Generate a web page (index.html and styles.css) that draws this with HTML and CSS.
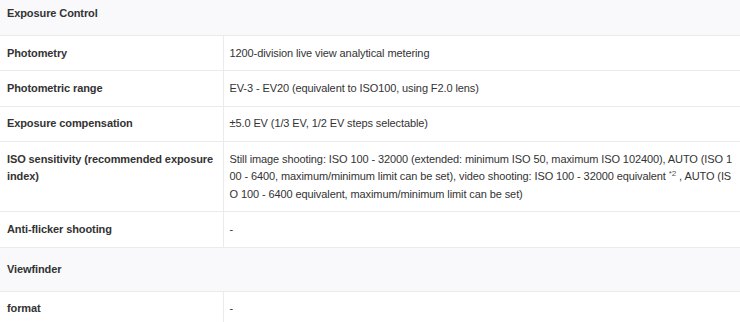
FILE: index.html
```html
<!DOCTYPE html>
<html>
<head>
<meta charset="utf-8">
<link rel="stylesheet" href="styles.css">
</head>
<body>
<table class="spec">
  <colgroup>
    <col class="col-label">
    <col class="col-value">
  </colgroup>
  <tbody>
    <tr class="section"><th colspan="2">Exposure Control</th></tr>
    <tr><th class="label">Photometry</th><td class="value">1200-division live view analytical metering</td></tr>
    <tr><th class="label">Photometric range</th><td class="value">EV-3 - EV20 (equivalent to ISO100, using F2.0 lens)</td></tr>
    <tr><th class="label">Exposure compensation</th><td class="value">±5.0 EV (1/3 EV, 1/2 EV steps selectable)</td></tr>
    <tr><th class="label">ISO sensitivity (recommended exposure index)</th><td class="value">Still image shooting: ISO 100 - 32000 (extended: minimum ISO 50, maximum ISO 102400), AUTO (ISO 100 - 6400, maximum/minimum limit can be set), video shooting: ISO 100 - 32000 equivalent <sup class="note">*2</sup> , AUTO (ISO 100 - 6400 equivalent, maximum/minimum limit can be set)</td></tr>
    <tr><th class="label">Anti-flicker shooting</th><td class="value">-</td></tr>
    <tr class="section"><th colspan="2">Viewfinder</th></tr>
    <tr><th class="label">format</th><td class="value">-</td></tr>
  </tbody>
</table>
</body>
</html>
```
FILE: styles.css
```css
html, body {
  margin: 0;
  padding: 0;
  background: #ffffff;
}
body {
  font-family: "Liberation Sans", Arial, sans-serif;
  font-size: 11px;
  line-height: 17.4px;
  letter-spacing: -0.1px;
  color: #333333;
}
.spec {
  width: 740px;
  margin-top: -8px;
  border-collapse: collapse;
  table-layout: fixed;
}
.col-label {
  width: 223px;
}
.spec th, .spec td {
  text-align: left;
  vertical-align: top;
  border-bottom: 1px solid #ebebeb;
}
.section th {
  background: #f9f9fb;
  font-weight: 700;
  padding: 12.8px 7px;
}
.label {
  font-weight: 700;
  padding: 8.5px 3px 8.5px 7px;
  border-right: 1px solid #ebebeb;
}
.value {
  font-weight: 400;
  padding: 8.5px 5px 8.5px 6px;
  word-break: break-all;
}
.note {
  font-size: 8px;
  line-height: 0;
  vertical-align: 4px;
  color: #555;
}
```
